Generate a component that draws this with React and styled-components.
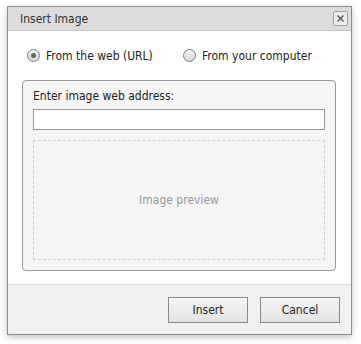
import React, { useState } from "react";
import styled, { createGlobalStyle } from "styled-components";

const Global = createGlobalStyle`
  html, body { margin: 0; padding: 0; background: #fff; }
  body { font-family: "DejaVu Sans Condensed", "DejaVu Sans", Verdana, sans-serif; font-size: 12px; color: #222; }
`;

const Page = styled.div`
  width: 361px;
  height: 344px;
  padding: 6px 0 0 7px;
  box-sizing: border-box;
`;

const Dialog = styled.div`
  width: 345px;
  height: 329px;
  box-sizing: border-box;
  border: 1px solid #8e8e8e;
  background: #fff;
  box-shadow: 0 2px 6px rgba(0, 0, 0, 0.25);
  display: flex;
  flex-direction: column;
`;

const Header = styled.div`
  height: 23px;
  background: #dcdcdc;
  border-bottom: 1px solid #c4c4c4;
  display: flex;
  align-items: center;
  justify-content: space-between;
  padding: 0 3px 0 12px;
`;

const Title = styled.span`
  font-size: 12px;
  color: #333;
`;

const CloseBtn = styled.button`
  width: 15px;
  height: 15px;
  padding: 0;
  border: 1px solid #a0a0a0;
  border-radius: 2px;
  background: #ececec;
  display: flex;
  align-items: center;
  justify-content: center;
  cursor: pointer;
`;

const Body = styled.div`
  flex: 1;
  padding: 12px 15px 13px 14px;
  display: flex;
  flex-direction: column;
`;

const Choices = styled.div`
  display: flex;
  padding-left: 5px;
  height: 25px;
  align-items: center;
  margin-bottom: 12px;
`;

const Choice = styled.label`
  display: flex;
  align-items: center;
  gap: 6px;
  width: ${(p) => p.width || "auto"};
  white-space: nowrap;
  font-size: 12px;
  color: #222;
  cursor: pointer;
`;

const Radio = styled.span`
  width: 11px;
  height: 11px;
  border-radius: 50%;
  border: 1px solid #7a7a7a;
  background: linear-gradient(#f4f4f4, #d8d8d8);
  display: flex;
  align-items: center;
  justify-content: center;
  flex-shrink: 0;
  &::after {
    content: "";
    width: 5px;
    height: 5px;
    border-radius: 50%;
    background: ${(p) => (p.checked ? "#666" : "transparent")};
  }
`;

const Group = styled.div`
  flex: 1;
  border: 1px solid #9a9a9a;
  border-radius: 4px;
  background: #f5f5f5;
  padding: 8px 10px 10px 10px;
  display: flex;
  flex-direction: column;
`;

const Label = styled.div`
  font-size: 12px;
  color: #222;
  margin-bottom: 6px;
`;

const Input = styled.input`
  height: 21px;
  box-sizing: border-box;
  border: 1px solid #9a9a9a;
  background: #fff;
  outline: none;
  font: inherit;
  margin: 0 0 10px 0;
`;

const Preview = styled.div`
  flex: 1;
  border: 1px dashed #cfcfcf;
  display: flex;
  align-items: center;
  justify-content: center;
  color: #999;
  font-size: 12px;
`;

const Footer = styled.div`
  height: 49px;
  background: #f1f1f1;
  border-top: 1px solid #dcdcdc;
  display: flex;
  align-items: center;
  justify-content: flex-end;
  gap: 12px;
  padding-right: 11px;
`;

const Button = styled.button`
  width: 80px;
  height: 26px;
  border: 1px solid #8a8a8a;
  background: linear-gradient(#f6f6f6, #e2e2e2);
  font-family: inherit;
  font-size: 12px;
  color: #222;
  cursor: pointer;
`;

export default function App() {
  const [mode, setMode] = useState("web");
  return (
    <Page>
      <Global />
      <Dialog>
        <Header>
          <Title>Insert Image</Title>
          <CloseBtn aria-label="Close">
            <svg width="9" height="9" viewBox="0 0 9 9">
              <path d="M1.5 1.5 L7.5 7.5 M7.5 1.5 L1.5 7.5" stroke="#555" strokeWidth="1.4" />
            </svg>
          </CloseBtn>
        </Header>
        <Body>
          <Choices>
            <Choice width="156px" onClick={() => setMode("web")}>
              <Radio checked={mode === "web"} />
              From the web (URL)
            </Choice>
            <Choice onClick={() => setMode("pc")}>
              <Radio checked={mode === "pc"} />
              From your computer
            </Choice>
          </Choices>
          <Group>
            <Label>Enter image web address:</Label>
            <Input />
            <Preview>Image preview</Preview>
          </Group>
        </Body>
        <Footer>
          <Button>Insert</Button>
          <Button>Cancel</Button>
        </Footer>
      </Dialog>
    </Page>
  );
}
